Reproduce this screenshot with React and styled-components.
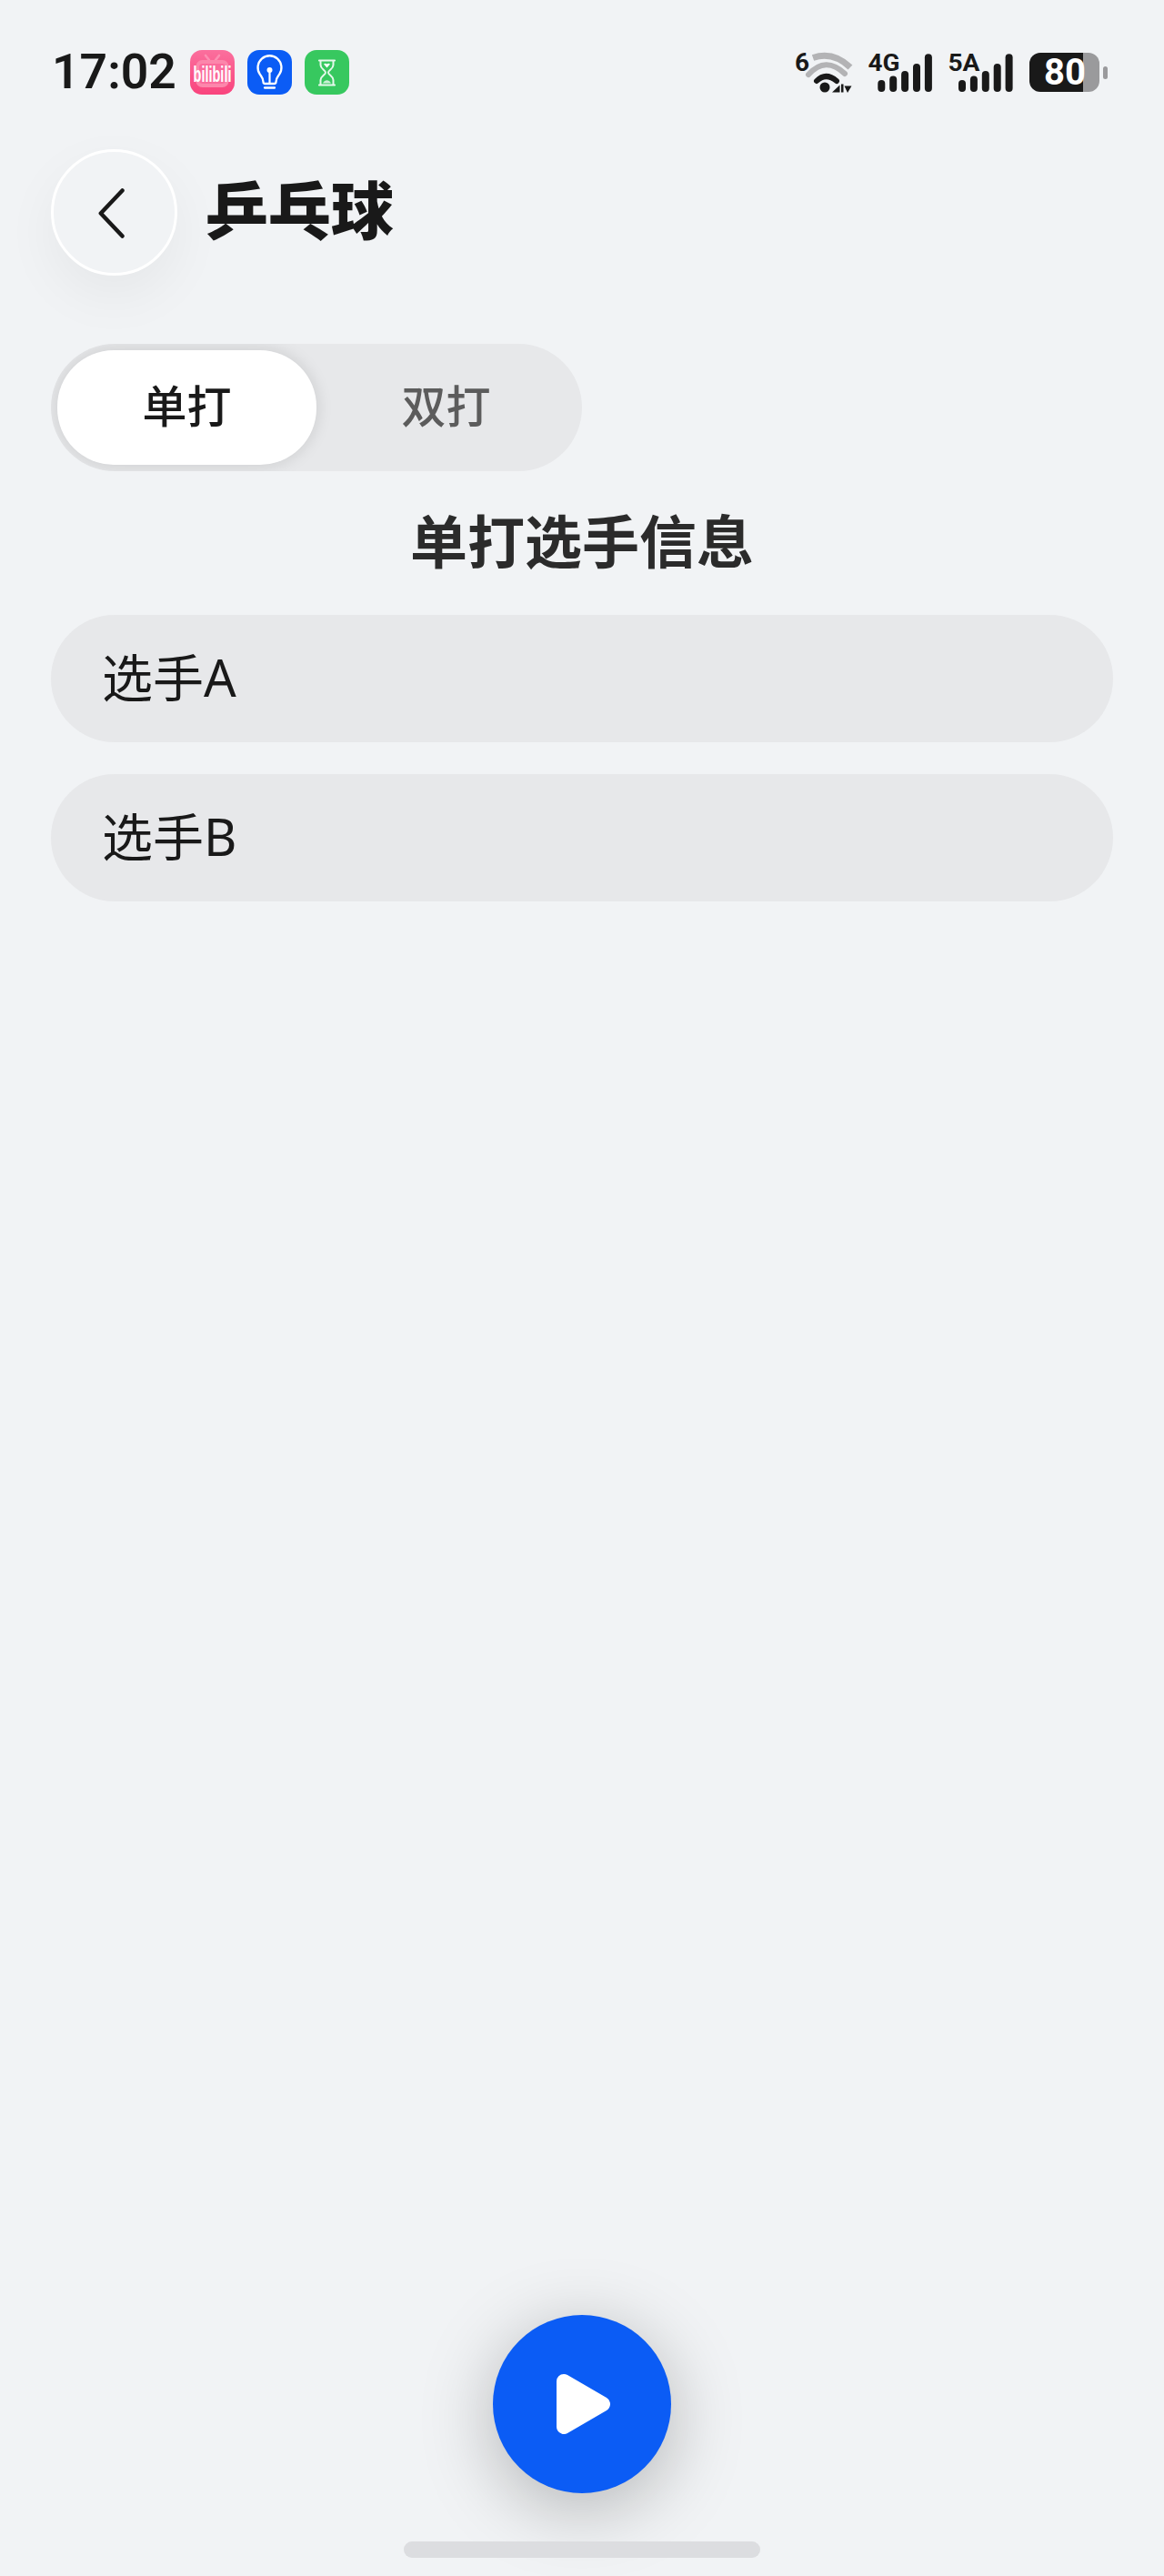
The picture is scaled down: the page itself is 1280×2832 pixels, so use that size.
import React from "react";
import styled, { createGlobalStyle } from "styled-components";

const CJK = `"Noto Sans", "Noto Sans CJK SC", sans-serif`;

const Global = createGlobalStyle`
  html, body { margin: 0; padding: 0; background: #f1f3f5; }
  * { box-sizing: border-box; }
  body { font-family: ${CJK}; color: #191919; }
`;

const Page = styled.div`
  width: 1280px;
  height: 2832px;
  display: flex;
  flex-direction: column;
  background: #f1f3f5;
  overflow: hidden;
`;

const StatusBar = styled.header`
  display: flex;
  justify-content: space-between;
  align-items: flex-start;
  padding: 55px 62px 0 57px;
  height: 164px;
`;

const StatusLeft = styled.div`
  display: flex;
  align-items: center;
  gap: 14px;
`;

const Time = styled.span`
  flex: none;
  white-space: nowrap;
  font: 600 53.5px/56px Roboto, sans-serif;
  color: #191919;
  margin: -4px 0 -3px;
  min-width: 138px;
`;

const AppIcon = styled.svg`
  width: 49px;
  height: 49px;
  display: block;
  border-radius: 13px;
`;

const StatusRight = styled.div`
  display: flex;
  align-items: flex-start;
  gap: 16px;
`;

const StatusIcon = styled.svg`
  display: block;
  height: 48px;
  flex: none;
  overflow: visible;
`;

const BatteryWrap = styled.div`
  display: flex;
  align-items: center;
  gap: 4px;
  margin-top: 3px;
`;

const BatteryBody = styled.div`
  width: 77px;
  height: 43px;
  border-radius: 12px;
  background: linear-gradient(to right, #191919 0 59px, #9a9a9c 59px);
  color: #fff;
  font: 700 40px/43px Roboto, sans-serif;
  padding-left: 16px;
  white-space: nowrap;
`;

const BatteryNub = styled.div`
  width: 5px;
  height: 14px;
  border-radius: 3px;
  background: #9a9a9c;
`;

const Main = styled.main`
  padding: 0 56px;
  display: flex;
  flex-direction: column;
`;

const NavRow = styled.div`
  display: flex;
  align-items: center;
  gap: 31px;
`;

const BackButton = styled.button`
  width: 139px;
  height: 139px;
  padding: 0;
  border: 3px solid #fff;
  border-radius: 50%;
  background: #f1f3f5;
  box-shadow: 0 22px 60px rgba(0, 0, 0, 0.05);
  display: flex;
  align-items: center;
  justify-content: center;
`;

const PageTitle = styled.h1`
  margin: 0 0 5px;
  font: 900 69px/80px ${CJK};
  color: #191919;
`;

const Segments = styled.div`
  margin-top: 75px;
  width: 584px;
  height: 140px;
  padding: 7px;
  display: flex;
  border-radius: 70px;
  background: #e7e8ea;
  overflow: hidden;
`;

const Segment = styled.div`
  flex: 1;
  padding-bottom: 3px;
  border-radius: 62px;
  display: flex;
  align-items: center;
  justify-content: center;
  font: 500 49px/1 ${CJK};
  color: ${(p) => (p.$active ? "#191919" : "#5c5c5c")};
  background: ${(p) => (p.$active ? "#fff" : "transparent")};
  box-shadow: ${(p) => (p.$active ? "0 0 18px rgba(0, 0, 0, 0.13)" : "none")};
`;

const SectionTitle = styled.h2`
  margin: 0;
  height: 158px;
  padding-bottom: 5px;
  display: flex;
  align-items: center;
  justify-content: center;
  font: 700 63px/1 ${CJK};
  color: #2b2b2b;
`;

const Fields = styled.div`
  display: flex;
  flex-direction: column;
  gap: 35px;
`;

const Field = styled.div`
  height: 140px;
  padding: 0 0 4px 56px;
  display: flex;
  align-items: center;
  border-radius: 70px;
  background: #e7e8ea;
  font: 400 56px/1 ${CJK};
  color: #191919;
`;

const Footer = styled.footer`
  margin-top: auto;
  padding-bottom: 20px;
  display: flex;
  flex-direction: column;
  align-items: center;
  gap: 53px;
`;

const PlayButton = styled.button`
  width: 196px;
  height: 196px;
  padding: 0;
  border: none;
  border-radius: 50%;
  background: #0b5cf5;
  box-shadow: 0 16px 80px rgba(0, 0, 0, 0.26);
  display: flex;
  align-items: center;
  justify-content: center;
`;

const PlayGlyph = styled.svg`
  width: 59px;
  height: 66px;
  margin-left: 3px;
  display: block;
`;

const HomeBar = styled.div`
  width: 392px;
  height: 18px;
  border-radius: 9px;
  background: #dcdde0;
`;

const BiliIcon = () => (
  <AppIcon viewBox="0 0 49 49">
    <defs>
      <linearGradient id="bili" x1="0" y1="0" x2="0" y2="1">
        <stop offset="0" stopColor="#fb6f9d" />
        <stop offset="1" stopColor="#f9447d" />
      </linearGradient>
    </defs>
    <rect width="49" height="49" fill="url(#bili)" />
    <path d="M17 6l4 5M32 6l-4 5" stroke="#fc8fb2" strokeWidth="2.6" strokeLinecap="round" />
    <rect x="6.500" y="11" width="36" height="30" rx="7" fill="#fc86ab" />
    <rect x="10" y="15" width="29" height="22" rx="4" fill="#fb6a9b" />
    <text transform="translate(24.5 35) scale(1 1.65)" textAnchor="middle" fontFamily="Liberation Sans, sans-serif" fontWeight="700" fontSize="14.5" fill="#fff">bilibili</text>
  </AppIcon>
);

const BulbIcon = () => (
  <AppIcon viewBox="0 0 49 49">
    <rect width="49" height="49" fill="#0b5cf5" />
    <path d="M17.500 35c0-4-1.500-5.200-3.600-8.200A13 13 0 1 1 35.100 26.800C33 29.800 31.500 31 31.500 35a2 2 0 0 1-2 2h-10a2 2 0 0 1-2-2z" fill="none" stroke="#fff" strokeWidth="2.300" />
    <path d="M19 41.500h11" stroke="#fff" strokeWidth="2.300" strokeLinecap="round" />
    <circle cx="24.500" cy="22" r="3" fill="#fff" />
    <path d="M24.500 23v13" stroke="#fff" strokeWidth="2.200" />
  </AppIcon>
);

const HourglassIcon = () => (
  <AppIcon viewBox="0 0 49 49">
    <rect width="49" height="49" fill="#37c85f" />
    <path d="M16 11.500h17M16 38.500h17" stroke="#e6f8eb" strokeWidth="2.200" strokeLinecap="round" />
    <path d="M17.500 12v4.500c0 4.500 5.500 5.500 5.500 8.200s-5.500 4-5.500 8.300v5M31.500 12v4.500c0 4.500-5.500 5.500-5.500 8.200s5.500 4 5.500 8.300v5" fill="none" stroke="#e6f8eb" strokeWidth="2" />
    <path d="M21 15.500c1.200-1 2.500-.8 3.500 0 1-.8 2.300-1 3.500 0l-3.500 4z" fill="#fff" />
    <path d="M20 36.500c1-2.500 3-3.200 4.500-3.200s3.500.7 4.500 3.200z" fill="#c9f0d5" />
  </AppIcon>
);

const WifiIcon = () => (
  <StatusIcon viewBox="0 0 65 48" style={{ width: 65 }}>
    <text x="0" y="23" fontFamily="Roboto, sans-serif" fontWeight="700" fontSize="28" fill="#191919">6</text>
    <path d="M20 8.500Q42 1 61 19" fill="none" stroke="#b3b3b5" strokeWidth="7" />
    <path d="M15 27Q34 6 55 26" fill="none" stroke="#b3b3b5" strokeWidth="6" strokeLinecap="round" />
    <path d="M24 34Q34 24 46 34" fill="none" stroke="#191919" strokeWidth="6" strokeLinecap="round" />
    <circle cx="33" cy="41" r="5.500" fill="#191919" />
    <path d="M41 46.500l8.500-8v8zM51 37.500h2.500v9H51zM54.500 39.500h8L58 47z" fill="#191919" />
  </StatusIcon>
);

const SignalIcon = ({ label, offset }) => {
  const heights = [13, 17.5, 23, 31, 41.7];
  return (
    <StatusIcon viewBox={`0 0 ${offset + 58} 48`} style={{ width: offset + 58 }}>
      <text x="-0.500" y="22.500" fontFamily="Roboto, sans-serif" fontWeight="700" fontSize="25" textLength="35" lengthAdjust="spacingAndGlyphs" fill="#191919">{label}</text>
      {heights.map((h, i) => (
        <rect key={i} x={offset - 4 + i * 12.9} y={46 - h} width="8" height={h} rx="4" fill="#191919" />
      ))}
    </StatusIcon>
  );
};

export default function App() {
  return (
    <Page>
      <Global />
      <StatusBar>
        <StatusLeft>
          <Time>17:02</Time>
          <BiliIcon />
          <BulbIcon />
          <HourglassIcon />
        </StatusLeft>
        <StatusRight>
          <WifiIcon />
          <SignalIcon label="4G" offset={14.3} />
          <SignalIcon label="5A" offset={15} />
          <BatteryWrap>
            <BatteryBody>80</BatteryBody>
            <BatteryNub />
          </BatteryWrap>
        </StatusRight>
      </StatusBar>
      <Main>
        <NavRow>
          <BackButton aria-label="返回">
            <svg width="36" height="62" viewBox="0 0 36 62" fill="none">
              <path d="M26.500 6.500 2.800 31.500 26.500 56.500" stroke="#191919" strokeWidth="4.500" strokeLinecap="round" strokeLinejoin="round" />
            </svg>
          </BackButton>
          <PageTitle>乒乓球</PageTitle>
        </NavRow>
        <Segments>
          <Segment $active>单打</Segment>
          <Segment>双打</Segment>
        </Segments>
        <SectionTitle>单打选手信息</SectionTitle>
        <Fields>
          <Field>选手A</Field>
          <Field>选手B</Field>
        </Fields>
      </Main>
      <Footer>
        <PlayButton aria-label="开始">
          <PlayGlyph viewBox="0 0 59 66">
            <path d="M8 8 51 33 8 58z" fill="#fff" stroke="#fff" strokeWidth="16" strokeLinejoin="round" />
          </PlayGlyph>
        </PlayButton>
        <HomeBar />
      </Footer>
    </Page>
  );
}
